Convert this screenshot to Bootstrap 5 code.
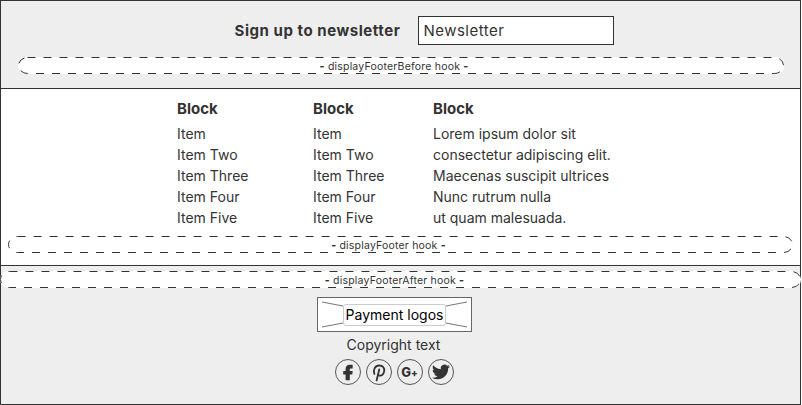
<!DOCTYPE html>
<html lang="en">
<head>
    <meta charset="UTF-8">
    <title>Footer layout</title>
    <link href="https://cdn.jsdelivr.net/npm/bootstrap@5.3.0/dist/css/bootstrap.min.css" rel="stylesheet">
    <style>
        html, body { height: 405px; overflow: hidden; }
        body { font-family: Inter, "Liberation Sans", sans-serif; font-size: 14px; color: #333; background: #fff; }
        .frame { width: 801px; height: 405px; border: 1px solid #333; }
        .band-top { background: #eee; height: 88px; border-bottom: 1px solid #333; padding-top: 15px; }
        .news-row { padding-left: 48px; }
        .news-title { font-size: 15px; font-weight: 700; letter-spacing: .55px; margin-right: 18px; padding-top: 1px; }
        .news-input { width: 196px; height: 29px; border: 1px solid #333; background: #fff; padding: 0 4px; font-size: 15px; line-height: 27px; letter-spacing: .5px; }
        .hook { position: relative; height: 17px; background: #fff; border-radius: 9px; font-size: 10.5px; line-height: 19px; letter-spacing: .2px; text-align: center; color: #333; }
        .hook svg { position: absolute; left: 0; top: 0; width: 100%; height: 100%; overflow: visible; }
        .hook rect { fill: none; stroke: #333; stroke-dasharray: 8 8; }
        .hook b { font-weight: 800; }
        .hook-before { margin: 12px 16px 0 17px; padding-right: 14px; }
        .band-mid { height: 177px; border-bottom: 1px solid #333; padding-top: 10px; }
        .block-cols { padding-left: 176px; }
        .block-title { font-size: 15px; font-weight: 700; line-height: 20px; margin-bottom: 4px; }
        .block-line { font-size: 14px; line-height: 21px; white-space: nowrap; }
        .col-one { width: 136px; }
        .col-two { width: 120px; }
        .hook-main { margin: 8px 7px 0; padding-right: 24px; }
        .band-low { background: #eee; height: 138px; padding-top: 5px; }
        .hook-after { margin-left: -1px; width: 801px; padding-right: 12px; }
        .low-inner { padding-right: 12px; }
        .pay-box { width: 155px; height: 35px; margin: 9px auto 0; border: 1px solid #666; background: #fff; position: relative; }
        .pay-box svg { position: absolute; left: 0; top: 0; }
        .pay-text { position: relative; height: 22px; background: #fff; border: 1px solid #ccc; border-radius: 3px; color: #000; font-size: 14px; padding: 0 2px; line-height: 20px; }
        .copy-text { font-size: 14px; line-height: 20px; margin-top: 3px; padding-right: 2px; }
        .social-row { margin-top: 4px; gap: 5px; padding-right: 1px; }
        .social-ic { width: 26px; height: 26px; border: 1px solid #555; border-radius: 50%; color: #333; }
        .gplus-text { font-size: 13px; font-weight: 800; line-height: 1; }
        .gplus-text small { font-size: 10px; font-weight: 800; }
    </style>
</head>
<body class="m-0">
<div class="frame">
    <div class="band-top">
        <div class="d-flex justify-content-center align-items-center news-row">
            <span class="news-title">Sign up to newsletter</span>
            <div class="news-input">Newsletter</div>
        </div>
        <div class="hook hook-before">
            <svg><rect x="0.5" y="0.5" width="calc(100% - 1px)" height="16" rx="9" ry="8"/></svg>
            <b>-</b> displayFooterBefore hook <b>-</b>
        </div>
    </div>
    <div class="band-mid">
        <div class="d-flex block-cols">
            <div class="col-one">
                <div class="block-title">Block</div>
                <div class="block-line">Item</div>
                <div class="block-line">Item Two</div>
                <div class="block-line">Item Three</div>
                <div class="block-line">Item Four</div>
                <div class="block-line">Item Five</div>
            </div>
            <div class="col-two">
                <div class="block-title">Block</div>
                <div class="block-line">Item</div>
                <div class="block-line">Item Two</div>
                <div class="block-line">Item Three</div>
                <div class="block-line">Item Four</div>
                <div class="block-line">Item Five</div>
            </div>
            <div>
                <div class="block-title">Block</div>
                <div class="block-line">Lorem ipsum dolor sit</div>
                <div class="block-line">consectetur adipiscing elit.</div>
                <div class="block-line">Maecenas suscipit ultrices</div>
                <div class="block-line">Nunc rutrum nulla</div>
                <div class="block-line">ut quam malesuada.</div>
            </div>
        </div>
        <div class="hook hook-main">
            <svg><rect x="0.5" y="0.5" width="calc(100% - 1px)" height="16" rx="9" ry="8"/></svg>
            <b>-</b> displayFooter hook <b>-</b>
        </div>
    </div>
    <div class="band-low">
        <div class="hook hook-after">
            <svg><rect x="0.5" y="0.5" width="calc(100% - 1px)" height="16" rx="9" ry="8"/></svg>
            <b>-</b> displayFooterAfter hook <b>-</b>
        </div>
        <div class="low-inner">
            <div class="pay-box d-flex align-items-center justify-content-center">
                <svg width="153" height="33" viewBox="0 0 153 33"><path d="M4 4 L25 8 M149 4 L128 8 M4 29 L25 25 M149 29 L128 25" stroke="#777" fill="none"/></svg>
                <span class="pay-text">Payment logos</span>
            </div>
            <div class="copy-text text-center">Copyright text</div>
            <div class="d-flex justify-content-center social-row">
                <div class="social-ic d-flex align-items-center justify-content-center">
                    <svg width="18" height="18" viewBox="0 0 24 24" fill="#333"><path d="M14.8 7.2h3.4V2.4h-4c-3.6 0-5.4 2.2-5.4 5.4v3H5.6v4.6h3.2V23h5.6v-7.6h3.3l.6-4.6h-3.9V8.6c0-.9.3-1.4 1.4-1.4z"/></svg>
                </div>
                <div class="social-ic d-flex align-items-center justify-content-center">
                    <svg width="19" height="19" viewBox="0 0 24 24" fill="none" stroke="#333" stroke-width="2.3" stroke-linecap="round"><path d="M6.8 13.8C4.6 9.2 7.6 3.2 13 3.2c4.4 0 6.8 3.2 6.2 7.2-.6 3.8-3.4 6.2-6 5.4-1.1-.3-1.8-1-2-1.6M13 8 9.6 22"/></svg>
                </div>
                <div class="social-ic d-flex align-items-center justify-content-center">
                    <span class="gplus-text">G<small>+</small></span>
                </div>
                <div class="social-ic d-flex align-items-center justify-content-center">
                    <svg width="18" height="18" viewBox="0 0 24 24" fill="#333"><path d="M23.953 4.57a10 10 0 01-2.825.775 4.958 4.958 0 002.163-2.723c-.951.555-2.005.959-3.127 1.184a4.92 4.92 0 00-8.384 4.482C7.69 8.095 4.067 6.13 1.64 3.162a4.822 4.822 0 00-.666 2.475c0 1.71.87 3.213 2.188 4.096a4.904 4.904 0 01-2.228-.616v.06a4.923 4.923 0 003.946 4.827 4.996 4.996 0 01-2.212.085 4.936 4.936 0 004.604 3.417 9.867 9.867 0 01-6.102 2.105c-.39 0-.779-.023-1.17-.067a13.995 13.995 0 007.557 2.209c9.053 0 13.998-7.496 13.998-13.985 0-.21 0-.42-.015-.63A9.935 9.935 0 0024 4.59z"/></svg>
                </div>
            </div>
        </div>
    </div>
</div>
</body>
</html>
